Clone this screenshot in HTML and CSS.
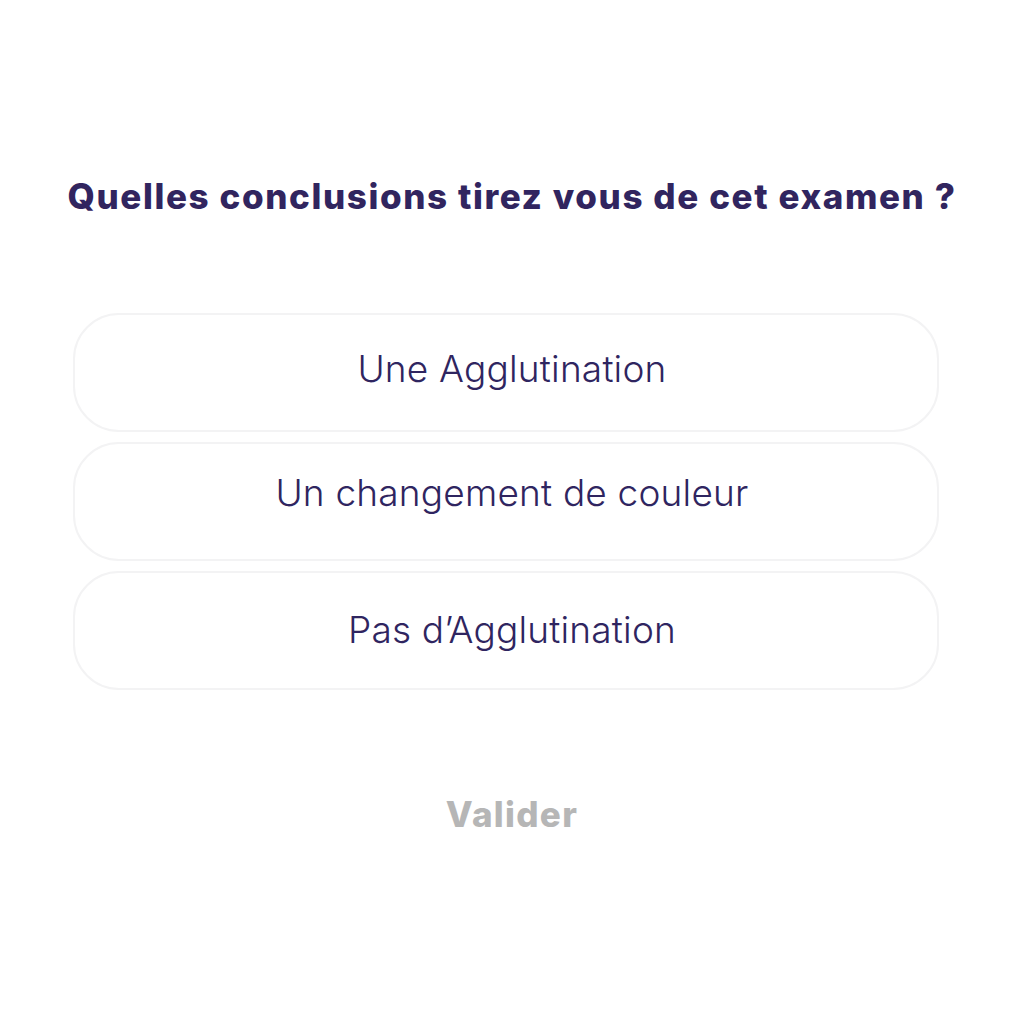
FILE: index.html
```html
<!DOCTYPE html>
<html lang="fr">
<head>
<meta charset="utf-8">
<link rel="stylesheet" href="styles.css">
</head>
<body>
<main class="quiz">
  <h1 class="question">Quelles conclusions tirez vous de cet examen ?</h1>
  <ul class="answers">
    <li class="answer a1">Une Agglutination</li>
    <li class="answer a2">Un changement de couleur</li>
    <li class="answer a3">Pas d’Agglutination</li>
  </ul>
  <button class="submit" type="button">Valider</button>
</main>
</body>
</html>
```
FILE: styles.css
```css
html, body {
  margin: 0;
  padding: 0;
  background: #ffffff;
}
.quiz {
  width: 1024px;
  height: 1024px;
  display: flex;
  flex-direction: column;
  align-items: center;
  box-sizing: border-box;
  padding-top: 172px;
}
.question {
  margin: 0;
  font-family: Inter, "Noto Sans", sans-serif;
  font-weight: 800;
  font-size: 35px;
  letter-spacing: 1.6px;
  line-height: 48px;
  color: #31255f;
  text-align: center;
}
.answers {
  list-style: none;
  align-self: flex-start;
  margin: 93px 0 0 73px;
  padding: 0;
  width: 866px;
  display: flex;
  flex-direction: column;
  gap: 10px;
}
.answer {
  box-sizing: border-box;
  height: 119px;
  padding-left: 12px;
  border: 2px solid #f3f3f4;
  border-radius: 46px;
  display: flex;
  align-items: center;
  justify-content: center;
  font-family: Inter, "Noto Sans", sans-serif;
  font-weight: 300;
  font-size: 37px;
  letter-spacing: 0.2px;
  color: #2f2560;
}
.a1 { padding-bottom: 9px; }
.a2 { padding-bottom: 19px; }
.a3 { padding-bottom: 2px; }
.submit {
  margin-top: 100px;
  border: none;
  background: none;
  padding: 0;
  font-family: Inter, "Noto Sans", sans-serif;
  font-weight: 800;
  font-size: 35px;
  letter-spacing: 1.3px;
  line-height: 48px;
  color: #b6b6b6;
}
```
